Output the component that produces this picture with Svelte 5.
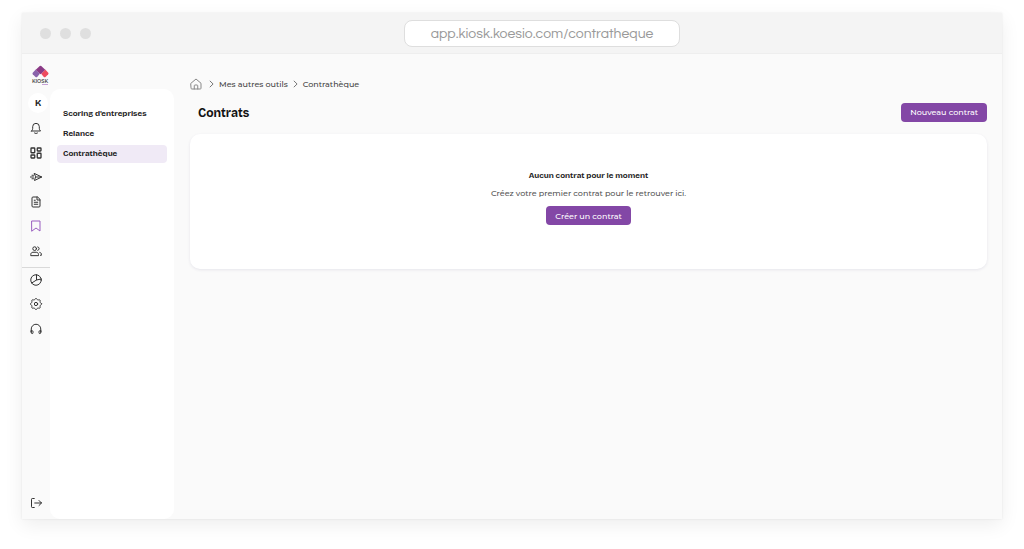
<script>
  const tools = [
    { id: 'bell', label: 'Notifications' },
    { id: 'grid', label: 'Tableau de bord' },
    { id: 'send', label: 'Envois' },
    { id: 'doc', label: 'Documents' },
    { id: 'bookmark', label: 'Mes autres outils', active: true },
    { id: 'users', label: 'Contacts' },
  ];
  const settings = [
    { id: 'pie', label: 'Statistiques' },
    { id: 'gear', label: 'Paramètres' },
    { id: 'headset', label: 'Assistance' },
  ];
  const pages = ["Scoring d'entreprises", 'Relance', 'Contrathèque'];
  let current = $state('Contrathèque');

  // Scalloped outline of the gear, eight lobes.
  const gear = Array.from({ length: 96 }, (_, i) => {
    const a = (i / 96) * 2 * Math.PI;
    const r = 10 + 1.2 * Math.cos(8 * a);
    return `${(12 + r * Math.cos(a)).toFixed(2)},${(12 + r * Math.sin(a)).toFixed(2)}`;
  }).join(' ');
</script>

{#snippet icon(id)}
  <svg class="icon" viewBox="0 0 24 24" aria-hidden="true">
    {#if id === 'bell'}
      <path d="M3 18h18c-1.600-1.800-2.400-3.200-2.400-5.500V9.300a6.600 6.600 0 0 0-13.200 0v3.200c0 2.300-.8 3.700-2.400 5.500zM9 22c1.700 1.200 4.300 1.200 6 0" />
    {:else if id === 'grid'}
      <g stroke-width="2.600"><rect x="2" y="2" width="7.500" height="9.500" rx="1" /><rect x="14.500" y="2" width="7.500" height="6" rx="1" /><rect x="2" y="16" width="7.500" height="6" rx="1" /><rect x="14.500" y="12.500" width="7.500" height="9.500" rx="1" /></g>
    {:else if id === 'send'}
      <path d="M9 5 23.500 12 9 19l2-7zM11 12h12M.8 12H7M4 8.500h3M4 15.500h3" />
    {:else if id === 'doc'}
      <path d="M14.500 2H6a2 2 0 0 0-2 2v16a2 2 0 0 0 2 2h12a2 2 0 0 0 2-2V7.500zM14 2v6h6M8.500 8.500h2M8.500 12.500h7M8.500 16.500h7" />
    {:else if id === 'bookmark'}
      <path d="M4 2h16v20l-8-6-8 6z" />
    {:else if id === 'users'}
      <path d="M1.500 20.500V19c0-2.700 2-4.500 4.500-4.500h6.500c2.500 0 4.500 1.800 4.500 4.500v1.500zM19.500 14.700c2 .4 3.300 1.800 3.300 3.800v2h-2M15.500 3.800a3.600 3.600 0 0 1 0 7" /><circle cx="9.300" cy="7.300" r="3.700" />
    {:else if id === 'pie'}
      <circle cx="12" cy="12" r="10.500" /><path d="M13 1.600V12l9.500-2M13 12l-9.500 6" />
    {:else if id === 'gear'}
      <polygon points={gear} /><circle cx="12" cy="12" r="3.300" />
    {:else if id === 'headset'}
      <path d="M2.500 18.500V12a9.500 9.500 0 0 1 19 0v6.500M2.500 15.500h2A1.500 1.500 0 0 1 6 17v2.500a1.700 1.700 0 0 1-3.500 0zM21.500 15.500h-2A1.500 1.500 0 0 0 18 17v2.500a1.700 1.700 0 0 0 3.500 0z" />
    {:else if id === 'home'}
      <path d="M2 10.500 12 2l10 8.500V20.500a1.500 1.500 0 0 1-1.500 1.500h-17A1.500 1.500 0 0 1 2 20.500zM8.500 22v-6.500A1.500 1.500 0 0 1 10 14h4a1.500 1.500 0 0 1 1.500 1.500V22" />
    {:else if id === 'logout'}
      <path d="M8.500 3H4.500A1.500 1.500 0 0 0 3 4.500v15A1.500 1.500 0 0 0 4.500 21h4M9.500 12H23M18 7l5 5-5 5" />
    {/if}
  </svg>
{/snippet}

{#snippet chevron()}
  <svg class="chevron" viewBox="0 0 5 8" aria-hidden="true"><path d="m.8.800 3.300 3.200L.8 7.200" /></svg>
{/snippet}

<div class="window">
  <header class="bar">
    <div class="dots"><span></span><span></span><span></span></div>
    <input class="address" aria-label="Adresse" value="app.kiosk.koesio.com/contratheque" readonly />
  </header>

  <div class="app">
    <nav class="rail" aria-label="Outils">
      <a class="logo" href="#accueil" aria-label="Kiosk">
        <svg viewBox="0 0 18 13" aria-hidden="true">
          <path d="M4 4.500 8.300 8.800 5.500 12.200Q4.600 13 3.700 12.200L.8 9.300Q.1 8.500.8 7.700z" fill="#8a63ab" />
          <path d="M14 4.500 9.700 8.800l2.800 3.400q.9.800 1.800 0l2.900-2.900q.7-.8 0-1.600z" fill="#ee4b5e" />
          <path d="M8.200.700Q9 0 9.800.700L14 4.700 9.700 9Q9 9.600 8.300 9L4 4.700z" fill="#8a3a86" />
        </svg>
        <span class="brand">KIOSK</span>
        <span class="underline"></span>
      </a>
      <button class="avatar" aria-label="Compte K">K</button>
      <div class="tools">
        {#each tools as t}
          <button class:active={t.active} aria-label={t.label}>{@render icon(t.id)}</button>
        {/each}
      </div>
      <div class="settings">
        {#each settings as s}
          <button aria-label={s.label}>{@render icon(s.id)}</button>
        {/each}
      </div>
      <button class="logout" aria-label="Déconnexion">{@render icon('logout')}</button>
    </nav>

    <nav class="pages" aria-label="Mes autres outils">
      {#each pages as p}
        <a href="#page" class:current={p === current} onclick={() => (current = p)}>{p}</a>
      {/each}
    </nav>

    <main>
      <nav class="crumbs" aria-label="Fil d'Ariane">
        <a class="home" href="#accueil" aria-label="Accueil">{@render icon('home')}</a>
        {@render chevron()}
        <a href="#outils">Mes autres outils</a>
        {@render chevron()}
        <a href="#contratheque">Contrathèque</a>
      </nav>
      <div class="heading">
        <h1>Contrats</h1>
        <button class="primary">Nouveau contrat</button>
      </div>
      <section class="card">
        <h2>Aucun contrat pour le moment</h2>
        <p>Créez votre premier contrat pour le retrouver ici.</p>
        <button class="primary">Créer un contrat</button>
      </section>
    </main>
  </div>
</div>

<style>
  :global(body) { background: #fff; }
  .window, .window * { box-sizing: border-box; }
  .window {
    --display: "Bricolage Grotesque", "Work Sans", Inter, sans-serif;
    display: flex;
    flex-direction: column;
    min-height: calc(100vh - 43px);
    margin: 13px 22px 30px 22px;
    background: #fafafa;
    font-family: Montserrat, Inter, sans-serif;
    font-size: 8px;
    color: #222;
    box-shadow: 0 0 2px rgba(0, 0, 0, 0.08), 0 6px 18px rgba(0, 0, 0, 0.07);
  }
  button { border: 0; padding: 0; background: none; font: inherit; color: inherit; cursor: pointer; }
  a { color: inherit; text-decoration: none; }
  .bar {
    display: grid;
    grid-template-columns: 382fr 276px 322fr;
    align-items: center;
    height: 41px;
    background: #f4f4f4;
    border-bottom: 1px solid #eee;
  }
  .dots { display: flex; gap: 9px; padding-left: 18px; }
  .dots span { width: 11px; height: 11px; border-radius: 50%; background: #dfdfdf; }
  .address {
    width: 100%;
    height: 27px;
    padding: 2px 4px 0;
    border: 1px solid #dedede;
    border-radius: 8px;
    background: #fff;
    color: #999;
    font-family: "Century Gothic", "URW Gothic", Questrial, "Didact Gothic", Lato, sans-serif;
    font-size: 14px;
    text-align: center;
    outline: none;
  }
  .app { flex: 1; display: flex; }
  .rail { display: flex; flex-direction: column; align-items: center; width: 28px; }
  .logo { display: flex; flex-direction: column; align-items: center; align-self: flex-end; width: 20px; height: 39px; padding-top: 11px; flex: none; }
  .logo svg { width: 17px; height: 13px; flex: none; }
  .brand { font: 600 5px/6px Montserrat, Inter, sans-serif; color: #444; }
  .underline { width: 6px; height: 1px; margin-left: 10px; background: #c6a2d6; }
  .avatar { width: 20px; height: 20px; align-self: flex-end; margin-right: 2px; flex: none; border-radius: 50%; background: #fff; font: 700 9px/20px var(--display); }
  .tools { display: grid; grid-auto-rows: 1fr; height: 147px; margin: 3px 0 4px; }
  .settings { display: grid; grid-auto-rows: 1fr; width: 100%; height: 74px; border-top: 1px solid #d9d9d9; justify-items: center; }
  .rail button { display: grid; place-items: center; }
  .icon { display: block; width: 12px; height: 12px; fill: none; stroke: #333; stroke-width: 2; stroke-linecap: round; stroke-linejoin: round; overflow: visible; }
  .active .icon { stroke: #9a5fc0; }
  .logout { margin: auto 0 10px; }
  .pages {
    display: flex;
    flex-direction: column;
    gap: 2px;
    width: 124px;
    margin-top: 35px;
    padding: 16px 7px;
    border-radius: 10px;
    background: #fff;
    font: 700 8px/18px var(--display);
  }
  .pages a { padding: 0 6px; border-radius: 4px; }
  .pages .current { background: #f0eaf6; }
  main { flex: 1; padding: 23px 15px 24px 16px; }
  .crumbs { display: flex; align-items: center; gap: 5px; height: 14px; color: #444; font-weight: 500; }
  .home { margin-right: 2px; }
  .home .icon { stroke: #888; }
  .chevron { width: 5px; height: 8px; fill: none; stroke: #777; stroke-width: 1; }
  .heading { display: flex; align-items: center; justify-content: space-between; height: 20px; margin: 11px 0 12px; }
  h1 { margin: 2px 0 0 8px; font: 700 12px/20px var(--display); color: #111; }
  .primary { height: 19px; padding: 0 9px; border-radius: 4px; background: #8347a6; color: #fff; font-weight: 500; white-space: nowrap; }
  .card {
    display: flex;
    flex-direction: column;
    align-items: center;
    padding: 34px 16px 44px;
    border-radius: 10px;
    background: #fff;
    box-shadow: 0 1px 3px rgba(60, 50, 110, 0.1);
  }
  h2 { margin: 0; font: 700 8px/16px var(--display); }
  p { margin: 1px 0 5px; line-height: 16px; font-weight: 500; color: #555; }
</style>
